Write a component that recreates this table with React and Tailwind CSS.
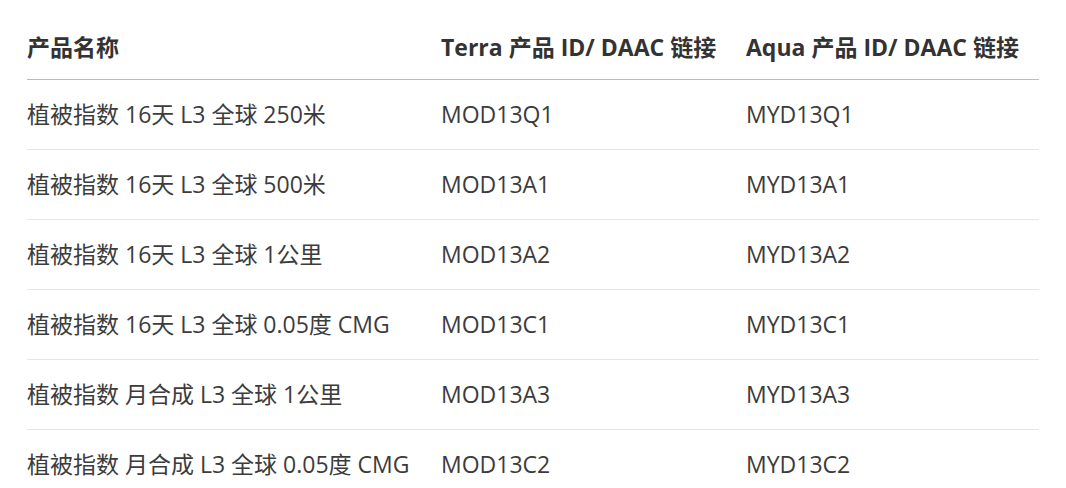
export default function App() {
  const rows = [
    ["植被指数 16天 L3 全球 250米", "MOD13Q1", "MYD13Q1"],
    ["植被指数 16天 L3 全球 500米", "MOD13A1", "MYD13A1"],
    ["植被指数 16天 L3 全球 1公里", "MOD13A2", "MYD13A2"],
    ["植被指数 16天 L3 全球 0.05度 CMG", "MOD13C1", "MYD13C1"],
    ["植被指数 月合成 L3 全球 1公里", "MOD13A3", "MYD13A3"],
    ["植被指数 月合成 L3 全球 0.05度 CMG", "MOD13C2", "MYD13C2"],
  ];
  return (
    <div className="w-[1066px] h-[488px] bg-white pl-[27px] font-['Open_Sans','Noto_Sans_CJK_SC',sans-serif]">
      <table className="table-fixed border-collapse w-[1012px]">
        <colgroup>
          <col className="w-[414px]" />
          <col className="w-[305px]" />
          <col className="w-[293px]" />
        </colgroup>
        <thead>
          <tr className="border-b border-[#bcbcbc] text-left text-[#333333] text-[23px] font-bold">
            <th className="h-[79px] pt-[15px] p-0 whitespace-nowrap">产品名称</th>
            <th className="h-[79px] pt-[15px] p-0 whitespace-nowrap">Terra 产品 ID/ DAAC 链接</th>
            <th className="h-[79px] pt-[15px] p-0 whitespace-nowrap">Aqua 产品 ID/ DAAC 链接</th>
          </tr>
        </thead>
        <tbody>
          {rows.map((r, i) => (
            <tr key={i} className="border-b border-[#e6e6e6] text-[#3c3c3c] text-[23px]">
              {r.map((c, j) => (
                <td key={j} className="h-[70px] p-0 whitespace-nowrap">{c}</td>
              ))}
            </tr>
          ))}
        </tbody>
      </table>
    </div>
  );
}
